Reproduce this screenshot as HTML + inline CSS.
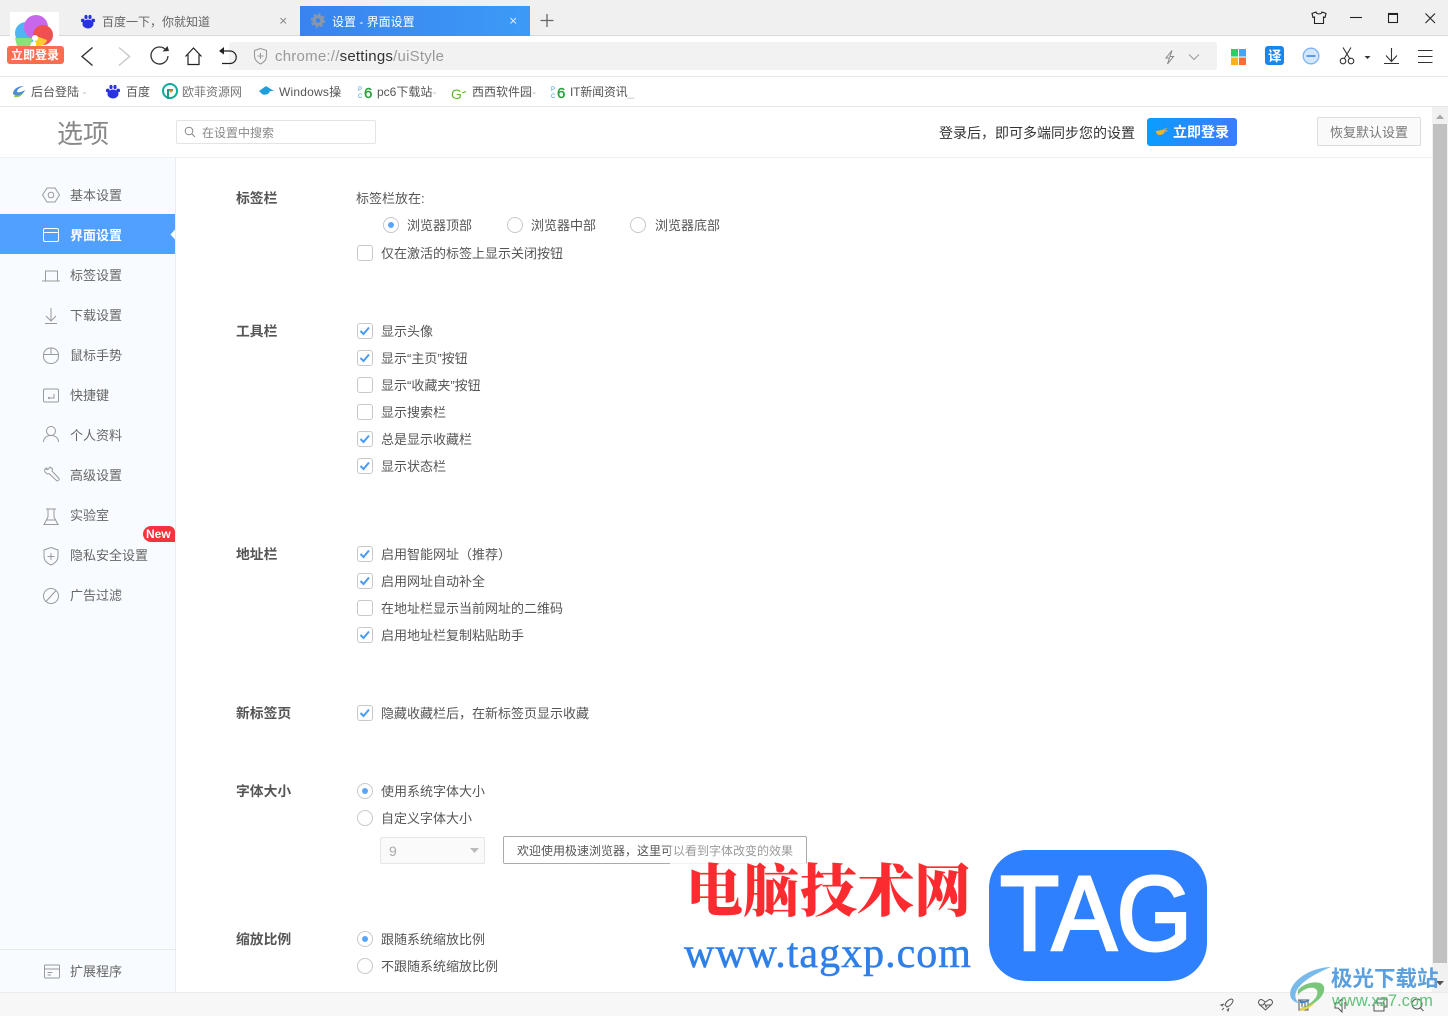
<!DOCTYPE html>
<html><head><meta charset="utf-8"><title>设置 - 界面设置</title>
<style>
html,body{margin:0;padding:0;background:#fff}
#p{position:relative;width:1448px;height:1016px;overflow:hidden;background:#fff;font-family:"Liberation Sans","Noto Sans CJK SC",sans-serif}
.b{position:absolute;box-sizing:border-box}
.t{position:absolute;white-space:nowrap;font-size:13px;line-height:18px;color:#555;margin-top:1px;font-family:"Liberation Sans","Noto Sans CJK SC",sans-serif}
.s{color:#666}
.h{font-weight:bold;color:#555;font-size:13.800px}
.k{font-size:12px;color:#555}
.c{position:absolute;left:357px;width:16px;height:16px;box-sizing:border-box;border:1px solid #c8c8c8;border-radius:3px;background:#fff}
.r{position:absolute;width:16px;height:16px;box-sizing:border-box;border:1px solid #c8c8c8;border-radius:50%;background:#fff}
.r.on:after{content:"";position:absolute;left:4px;top:4px;width:6px;height:6px;border-radius:50%;background:#5aa5fb}
svg{position:absolute;left:0;top:0}
</style></head><body><div id="p">

<div class="b" style="left:0;top:0;width:1448px;height:36px;background:#f0f0f0;border-bottom:1px solid #d8d8d8"></div>
<div class="b" style="left:300px;top:6px;width:230px;height:30px;background:linear-gradient(90deg,#3a83ef,#3c9af6)"></div>
<div class="b" style="left:0;top:76px;width:1448px;height:1px;background:#e8e8e8"></div>
<div class="b" style="left:0;top:106px;width:1448px;height:1px;background:#e6e6e6"></div>
<div class="b" style="left:229px;top:42px;width:988px;height:28px;background:#f2f2f2;border-radius:3px"></div>
<div class="b" style="left:10px;top:12px;width:49px;height:34px;background:#fff"></div>

<div class="t k" style="left:102px;top:12px;color:#666">百度一下，你就知道</div>
<div class="t k" style="left:332px;top:12px;color:#fff">设置 - 界面设置</div>

<div class="b" style="left:7px;top:46px;width:57px;height:18px;background:#fb6d50;border-radius:3px"></div>
<div class="t" style="left:11px;top:46px;margin-top:0;font-size:12px;font-weight:bold;color:#fff">立即登录</div>

<div class="t" style="left:275px;top:46px;font-size:15px;line-height:20px;color:#999;letter-spacing:.23px">chrome://<span style="color:#333">settings</span>/uiStyle</div>

<div class="t k" style="left:31px;top:82px">后台登陆 <span style="color:#bbb">-</span></div>
<div class="t k" style="left:126px;top:82px">百度</div>
<div class="t k" style="left:182px;top:82px;color:#777">欧菲资源网</div>
<div class="t k" style="left:279px;top:82px;width:64px;overflow:hidden;letter-spacing:.2px">Windows操</div>
<div class="t k" style="left:377px;top:82px">pc6下载站<span style="color:#bbb">-</span></div>
<div class="t k" style="left:472px;top:82px">西西软件园<span style="color:#bbb">-</span></div>
<div class="t k" style="left:570px;top:82px;letter-spacing:-.2px">IT新闻资讯<span style="color:#bbb">_</span></div>

<!-- header -->
<div class="b" style="left:0;top:157px;width:1432px;height:1px;background:#eef0f3"></div>
<div class="t" style="left:57px;top:116px;font-size:26px;line-height:34px;color:#888">选项</div>
<div class="b" style="left:176px;top:120px;width:200px;height:24px;border:1px solid #e4e4e4;border-radius:2px"></div>
<div class="t k" style="left:202px;top:123px;color:#888">在设置中搜索</div>
<div class="t" style="left:939px;top:123px;font-size:14px;color:#333">登录后，即可多端同步您的设置</div>
<div class="b" style="left:1147px;top:118px;width:90px;height:28px;border-radius:3px;background:linear-gradient(90deg,#0a9dff,#3f7aff)"></div>
<div class="t" style="left:1173px;top:123px;margin-top:0;font-size:14px;font-weight:bold;color:#fff">立即登录</div>
<div class="b" style="left:1317px;top:117px;width:104px;height:29px;border:1px solid #ddd;border-radius:2px;background:#fafafa"></div>
<div class="t" style="left:1330px;top:123px;color:#777">恢复默认设置</div>

<!-- sidebar -->
<div class="b" style="left:0;top:158px;width:176px;height:834px;background:#f8fbff;border-right:1px solid #e8ecf3"></div>
<div class="b" style="left:0;top:214px;width:175px;height:40px;background:#519ffe"></div>
<div class="b" style="left:0;top:949px;width:175px;height:1px;background:#e6eaf0"></div>
<div class="t s" style="left:70px;top:186px">基本设置</div>
<div class="t" style="left:70px;top:226px;color:#fff;font-weight:bold">界面设置</div>
<div class="t s" style="left:70px;top:266px">标签设置</div>
<div class="t s" style="left:70px;top:306px">下载设置</div>
<div class="t s" style="left:70px;top:346px">鼠标手势</div>
<div class="t s" style="left:70px;top:386px">快捷键</div>
<div class="t s" style="left:70px;top:426px">个人资料</div>
<div class="t s" style="left:70px;top:466px">高级设置</div>
<div class="t s" style="left:70px;top:506px">实验室</div>
<div class="t s" style="left:70px;top:546px">隐私安全设置</div>
<div class="t s" style="left:70px;top:586px">广告过滤</div>
<div class="t s" style="left:70px;top:962px">扩展程序</div>
<div class="b" style="left:143px;top:526px;width:32px;height:16px;background:#f4333c;border-radius:8px 6px 0 8px"></div>
<div class="t" style="left:146px;top:525px;margin-top:0;font-size:12px;font-weight:bold;color:#fff">New</div>

<!-- content labels -->
<div class="t h" style="left:236px;top:189px">标签栏</div>
<div class="t h" style="left:236px;top:322px">工具栏</div>
<div class="t h" style="left:236px;top:545px">地址栏</div>
<div class="t h" style="left:236px;top:704px">新标签页</div>
<div class="t h" style="left:236px;top:782px">字体大小</div>
<div class="t h" style="left:236px;top:930px">缩放比例</div>

<div class="t" style="left:356px;top:189px">标签栏放在:</div>
<div class="r on" style="left:383px;top:217px"></div><div class="t" style="left:407px;top:216px">浏览器顶部</div>
<div class="r" style="left:507px;top:217px"></div><div class="t" style="left:531px;top:216px">浏览器中部</div>
<div class="r" style="left:630px;top:217px"></div><div class="t" style="left:655px;top:216px">浏览器底部</div>

<div class="c" style="top:245px"></div><div class="t" style="left:381px;top:244px">仅在激活的标签上显示关闭按钮</div>
<div class="c" style="top:323px"></div><div class="t" style="left:381px;top:322px">显示头像</div>
<div class="c" style="top:350px"></div><div class="t" style="left:381px;top:349px">显示“主页”按钮</div>
<div class="c" style="top:377px"></div><div class="t" style="left:381px;top:376px">显示“收藏夹”按钮</div>
<div class="c" style="top:404px"></div><div class="t" style="left:381px;top:403px">显示搜索栏</div>
<div class="c" style="top:431px"></div><div class="t" style="left:381px;top:430px">总是显示收藏栏</div>
<div class="c" style="top:458px"></div><div class="t" style="left:381px;top:457px">显示状态栏</div>
<div class="c" style="top:546px"></div><div class="t" style="left:381px;top:545px">启用智能网址（推荐）</div>
<div class="c" style="top:573px"></div><div class="t" style="left:381px;top:572px">启用网址自动补全</div>
<div class="c" style="top:600px"></div><div class="t" style="left:381px;top:599px">在地址栏显示当前网址的二维码</div>
<div class="c" style="top:627px"></div><div class="t" style="left:381px;top:626px">启用地址栏复制粘贴助手</div>
<div class="c" style="top:705px"></div><div class="t" style="left:381px;top:704px">隐藏收藏栏后，在新标签页显示收藏</div>

<div class="r on" style="left:357px;top:783px"></div><div class="t" style="left:381px;top:782px">使用系统字体大小</div>
<div class="r" style="left:357px;top:810px"></div><div class="t" style="left:381px;top:809px">自定义字体大小</div>
<div class="b" style="left:380px;top:837px;width:105px;height:27px;background:#fafafa;border:1px solid #e6e6e6;border-radius:2px"></div>
<div class="t" style="left:389px;top:842px;margin-top:0;font-size:14px;color:#aaa">9</div>
<div class="b" style="left:503px;top:836px;width:304px;height:28px;border:1px solid #aaa;border-radius:2px;background:#fff"></div>
<div class="t" style="left:517px;top:841px;font-size:12px;color:#555">欢迎使用极速浏览器，这里可以看到字体改变的效果</div>
<div class="b" style="left:670px;top:842px;width:136px;height:23px;background:rgba(255,255,255,.4)"></div>
<div class="b" style="left:670px;top:862px;width:136px;height:3px;background:rgba(255,255,255,.75)"></div>
<div class="r on" style="left:357px;top:931px"></div><div class="t" style="left:381px;top:930px">跟随系统缩放比例</div>
<div class="r" style="left:357px;top:958px"></div><div class="t" style="left:381px;top:957px">不跟随系统缩放比例</div>

<!-- scrollbar -->
<div class="b" style="left:1432px;top:107px;width:16px;height:885px;background:#f1f1f1"></div>
<div class="b" style="left:1433px;top:124px;width:14px;height:839px;background:#c1c1c1"></div>
<!-- status -->
<div class="b" style="left:0;top:992px;width:1448px;height:24px;background:#f7f7f7;border-top:1px solid #ececec"></div>

<!-- watermark -->
<div class="t" style="left:686px;top:850px;margin-top:0;font-size:57px;line-height:74px;font-weight:900;color:#fb2b30;font-family:'Noto Serif CJK SC','Noto Sans CJK SC',sans-serif">电脑技术网</div>
<div class="t" style="left:684px;top:929px;margin-top:0;font-size:42px;line-height:50px;color:#2f7fe8;font-family:'Liberation Serif',serif;-webkit-text-stroke:.5px #2f7fe8;letter-spacing:1px">www.tagxp.com</div>
<div class="b" style="left:989px;top:850px;width:218px;height:131px;background:#2f80ff;border-radius:38px"></div>

<svg width="1448" height="1016" viewBox="0 0 1448 1016" fill="none">
<text x="1000" y="950" font-family="Liberation Sans" font-size="106" fill="#fff" stroke="#fff" stroke-width="3" textLength="192" lengthAdjust="spacingAndGlyphs">TAG</text>
<!-- app logo -->
<g>
<circle cx="26" cy="33" r="11" fill="#4fb4f5"/><path d="M15 38h18l-3 8H17z" fill="#8be07a"/>
<circle cx="36" cy="27" r="12" fill="#c768ec"/>
<circle cx="43" cy="35" r="10" fill="#f0504f"/>
<path d="M36 36l11 4a9 9 0 0 1-7 6h-4z" fill="#ffcb2f"/>
<circle cx="35" cy="38" r="3" fill="#fff"/>
</g>
<!-- baidu paw -->
<g fill="#2932e1">
<ellipse cx="88" cy="24" rx="5.500" ry="4.500"/><circle cx="82.800" cy="20.500" r="1.900"/><circle cx="93.200" cy="20.500" r="1.900"/><ellipse cx="86" cy="17" rx="1.600" ry="2.100"/><ellipse cx="90" cy="17" rx="1.600" ry="2.100"/>
<ellipse cx="113" cy="94" rx="5.500" ry="4.500"/><circle cx="107.800" cy="90.500" r="1.900"/><circle cx="118.200" cy="90.500" r="1.900"/><ellipse cx="111" cy="87" rx="1.600" ry="2.100"/><ellipse cx="115" cy="87" rx="1.600" ry="2.100"/>
</g>
<path d="M280.500 18l5.500 5.500M286 18l-5.500 5.500" stroke="#888"/>
<path d="M510.500 18l5.500 5.500M516 18l-5.500 5.500" stroke="#dcebff"/>
<path d="M547 14v13M540.500 20.500h13" stroke="#666" stroke-width="1.300"/>
<!-- gear -->
<circle cx="318" cy="20.500" r="4" stroke="#8a97a8" stroke-width="3.200"/><circle cx="318" cy="20.500" r="6.500" stroke="#8a97a8" stroke-width="1.600" stroke-dasharray="2.500 2.600"/>
<!-- window -->
<path d="M1316 12l-4 1.500 1 4 1.500-.5v6.500h9V17l1.500.5 1-4-4-1.500c-.5 2.500-5.500 2.500-6 0z" stroke="#222" stroke-width="1.100"/>
<path d="M1350 17.500h12" stroke="#222" stroke-width="1.100"/>
<rect x="1388.500" y="13.500" width="9" height="9" stroke="#222" stroke-width="1.100"/><path d="M1388 14h10" stroke="#222" stroke-width="2"/>
<path d="M1425.500 13.500l9.500 9.500M1435 13.500l-9.500 9.500" stroke="#222" stroke-width="1.100"/>
<!-- nav -->
<path d="M92.500 47.500L82 56.500l10.500 9" stroke="#333" stroke-width="1.400"/>
<path d="M119 47.500l10.500 9-10.500 9" stroke="#c8c8c8" stroke-width="1.400"/>
<path d="M166 50a8.500 8.500 0 1 0 2 6" stroke="#333" stroke-width="1.300"/><path d="M162.500 51.500l6.500-.5-1.500-5z" fill="#333"/>
<path d="M185.500 56.500l8-8.500 8 8.500M188 54.500v10h11v-10" stroke="#222" stroke-width="1.200"/>
<path d="M222 51h8a5.700 5.700 0 0 1 0 12.500h-8" stroke="#222" stroke-width="1.200"/><path d="M224 47l-5 4 5 3.500z" fill="#222"/>
<path d="M260.500 48.500l6 2v5.500c0 4-3 6.500-6 8-3-1.500-6-4-6-8v-5.500z" stroke="#999" stroke-width="1.100"/><path d="M260.500 53v6M257.500 56h6" stroke="#999"/>
<path d="M1172 50.500l-6 7.500h3.500l-2 6 6-7.500H1170z" stroke="#888"/>
<path d="M1189 54.500l5 5 5-5" stroke="#999"/>
<!-- extensions -->
<rect x="1231" y="49" width="7" height="7.500" fill="#2ecc67"/><rect x="1239" y="49" width="7" height="7.500" fill="#3fa8f5"/><rect x="1231" y="57.500" width="7" height="7.500" fill="#ffb11b"/><rect x="1239" y="57.500" width="7" height="7.500" fill="#ff6a3e"/>
<rect x="1265" y="46" width="19" height="19" rx="3" fill="#1787f0"/>
<text x="1268" y="61" font-family="Noto Sans CJK SC" font-size="13.500" font-weight="bold" fill="#fff">译</text>
<circle cx="1311" cy="56" r="7.800" fill="#d5e7ff" stroke="#7db3f7" stroke-width="1.300"/><path d="M1306.500 56h9" stroke="#5a9bf0" stroke-width="2"/>
<path d="M1343 47.500l7 11.500M1351 47.500l-7 11.500" stroke="#333" stroke-width="1.100"/><circle cx="1343" cy="61" r="2.800" stroke="#333" stroke-width="1.100"/><circle cx="1351" cy="61" r="2.800" stroke="#333" stroke-width="1.100"/>
<path d="M1364.500 56h6l-3 3z" fill="#333"/>
<path d="M1391.500 48v13M1386 55.500l5.500 6 5.500-6M1384 63.500h15" stroke="#333" stroke-width="1.100"/>
<path d="M1418 50.500h14.500M1418 56.500h14.500M1418 62.500h14.500" stroke="#333" stroke-width="1.100"/>
<!-- bookmarks icons -->
<path d="M13 94c0-5 5-8 11-8-3 1-7 3-7 6 3 1 6-1 8-2-1 4-6 6-9 6z" fill="#4a8fd4"/><path d="M15 95c3 1 6 0 8-2-1 3-5 5-9 4z" fill="#8ec73f"/>
<circle cx="170" cy="91" r="7" stroke="#11a99a" stroke-width="2"/><path d="M168 99v-9h5" stroke="#1a9c8a" stroke-width="2"/><circle cx="171" cy="91" r="1.500" fill="#f58c1e"/>
<path d="M259 91l7-5 8 5h-4c-1 4-7 5-9 2z" fill="#1fa0dd"/>
<text x="364" y="98" font-family="Liberation Sans" font-size="15" fill="#2aa13c" stroke="#2aa13c" stroke-width=".4">6</text>
<text x="358" y="91" font-family="Liberation Sans" font-size="6" fill="#3a9bdc">P</text><text x="358" y="98" font-family="Liberation Sans" font-size="6" fill="#3a9bdc">C</text>
<text x="557" y="98" font-family="Liberation Sans" font-size="15" fill="#2aa13c" stroke="#2aa13c" stroke-width=".4">6</text>
<text x="551" y="91" font-family="Liberation Sans" font-size="6" fill="#3a9bdc">P</text><text x="551" y="98" font-family="Liberation Sans" font-size="6" fill="#3a9bdc">C</text>
<text x="451" y="99" font-family="Liberation Sans" font-size="14" fill="#5cb531">G</text><path d="M462 93l4-1.500" stroke="#5cb531"/>
<!-- search -->
<circle cx="189" cy="131" r="3.800" stroke="#888"/><path d="M192 134l3 3" stroke="#888"/>
<!-- hand -->
<path d="M1156 131l6-1 6-2.500-3.500 3h3v1h-3c0 2-2 3.500-5 3.500-2.500 0-3.500-2-3.500-4z" fill="#f2b230"/>
<!-- active arrow -->
<path d="M175 229.500l-4.500 5 4.500 5z" fill="#fff"/>
<!-- sidebar icons -->
<g stroke="#999" stroke-width="1">
<path d="M47 188h8l4.500 7-4.500 7h-8l-4.500-7z"/><circle cx="51" cy="195" r="2.800"/>
<rect x="43.500" y="228.500" width="15" height="13" rx="1.500" stroke="#fff"/><path d="M43.500 232.500h15" stroke="#fff"/>
<path d="M45.500 281v-10h12v10M42 281h18"/>
<path d="M51 308v13M46 316l5 5 5-5M45 323.500h12"/>
<rect x="43.500" y="348" width="15" height="15.500" rx="7"/><path d="M43.500 354.500h15M51 348v6.500"/>
<rect x="43.500" y="389" width="15" height="13" rx="1.500"/><path d="M54 394v4h-6M48 398l1.500-1M48 398l1.500 1"/>
<circle cx="51" cy="431" r="4.500"/><path d="M43.500 442c0-4 3-6.500 7.500-6.500s7.500 2.500 7.500 6.500"/>
<path d="M47 468c-2 0-3 2-2 4l2 2 2-.5 7.500 7c1 1 3.500-1 2.500-2l-7-7.500.5-2-2.500-2-2 2.500h-1.500z"/>
<path d="M46 509h10M48 509v8l-4 7.500h14l-4-7.500v-8M46.500 520h9"/>
<path d="M51 547.500l7 2.500v6c0 4.500-3.500 7.500-7 9-3.500-1.500-7-4.500-7-9v-6zM51 553v7M47.500 556.500h7"/>
<circle cx="51" cy="596" r="7.500"/><path d="M46 601.500l10-11"/>
<rect x="44.500" y="965" width="15" height="13" rx="1"/><path d="M44.500 969h15M47.500 972.500h5M47.500 975h3.500"/>
</g>
<!-- checkmarks -->
<g stroke="#4a9bf5" stroke-width="2">
<path d="M360.500 331l3 3 5.500-6.500M360.500 358l3 3 5.500-6.500M360.500 439l3 3 5.500-6.500M360.500 466l3 3 5.500-6.500M360.500 554l3 3 5.500-6.500M360.500 581l3 3 5.500-6.500M360.500 635l3 3 5.500-6.500M360.500 713l3 3 5.500-6.500"/>
</g>
<path d="M470 848h9l-4.500 5z" fill="#bbb"/>
<!-- scrollbar arrows -->
<path d="M1436 119l4-4.500 4 4.500z" fill="#a8a8a8"/>
<path d="M1436 981h8l-4 4.500z" fill="#555"/>
<!-- status icons -->
<g stroke="#555" stroke-width="1">
<path d="M1231 999c-3 1-5 3-6 6l2 2c3-1 5-3 6-6 0-1 0-2-2-2zM1224 1004l-3 1 2 1M1229 1008l-1 3-1-2M1222 1010l2-2"/>
<path d="M1265.500 1010l-6-5.500c-2.500-3 .5-6 3-4.500l3 2 3-2c2.500-1.500 5.500 1.500 3 4.500z"/><path d="M1259 1005h4l1.500-2 1.500 4 1-2h4"/>
<path d="M1299 1000h9v10h-9zM1298 1000h11M1302 1003v4M1305 1003v4"/>
<path d="M1335 1003h3l4-4v13l-4-4h-3zM1345 1002v7"/>
<path d="M1374 1003h10v8h-10zM1377 1003v-4h10v8h-3"/>
<circle cx="1417" cy="1004" r="5"/><path d="M1420.500 1008l3 3"/>
</g>
<!-- jiguang watermark logo -->
<path d="M1331 967c-14 0-34 8-40 22-3 8 2 14 9 14-5-2-6-8-3-13 6-10 20-17 34-23z" fill="#69b2e8" opacity=".9"/>
<path d="M1298 990c5-6 15-9 22-7 6 2 5 9 1 14-5 6-14 11-22 12 8-3 16-8 18-14 2-6-3-8-8-7-4 1-8 3-11 7z" fill="#6cc06d" opacity=".9"/>
<path d="M1300 1000c3 2 8 1 10-1-1 3-6 5-10 4z" fill="#3a86c8"/>
<path d="M1299 1009c6-1 12-4 16-7-2 4-8 8-14 9z" fill="#e9d54a"/>
</svg>
<div class="t" style="left:1331px;top:965px;margin-top:0;font-size:21.500px;line-height:28px;font-weight:bold;color:#5b9fdc">极光下载站</div>
<div class="t" style="left:1332px;top:990px;margin-top:0;font-size:16.500px;line-height:22px;color:#63c17a">www.xz7.com</div>
</div></body></html>
